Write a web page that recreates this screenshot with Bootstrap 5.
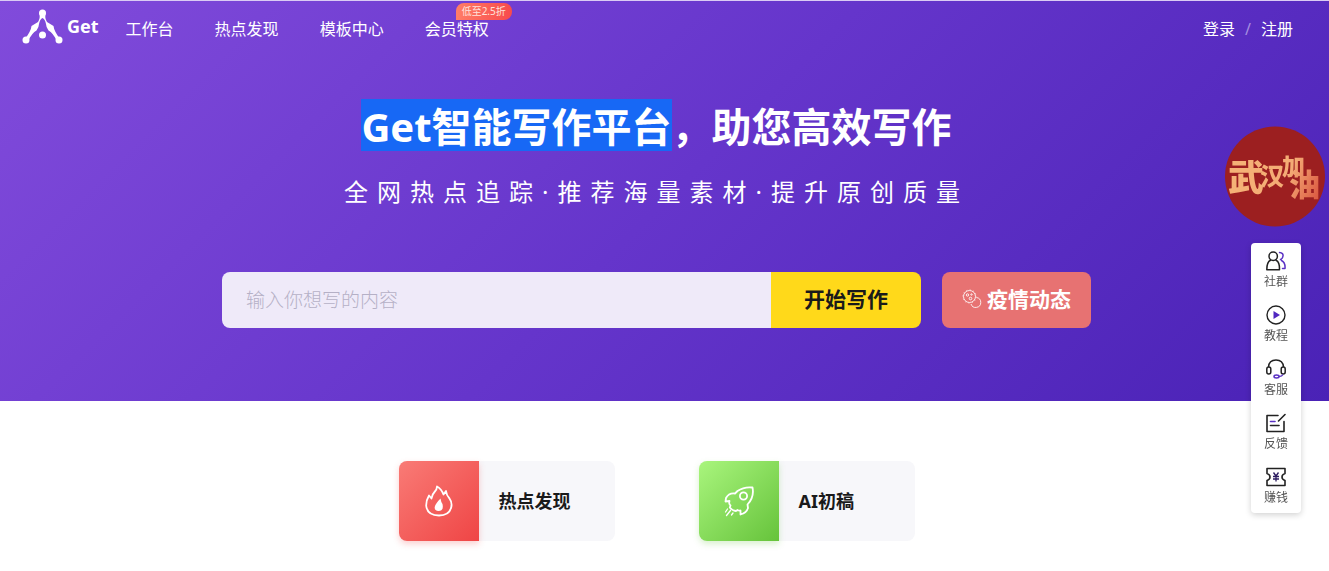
<!DOCTYPE html>
<html lang="zh-CN">
<head>
<meta charset="utf-8">
<meta name="viewport" content="width=device-width, initial-scale=1">
<title>Get智能写作平台</title>
<link href="https://cdn.jsdelivr.net/npm/bootstrap@5.3.0/dist/css/bootstrap.min.css" rel="stylesheet">
<style>
  body { font-family: "Noto Sans", "Noto Sans CJK SC", sans-serif; font-size: 16px; line-height: 24px; color: #1a1a1a; background: #fff; }
  .hero { background: linear-gradient(135deg, #814bdb 0%, #6535cb 50%, #4a22b6 100%); border-top: 1px solid #dacbf4; padding-bottom: 73px; color: #fff; }
  .site-nav { height: 56px; padding: 0 36px 0 22px; }
  .site-nav a { color: #fff; text-decoration: none; }
  .site-nav .brand { font-weight: 700; font-size: 18px; gap: 4px; margin-right: 27px; }
  .brand svg { margin-top: -5px; }
  .brand span { margin-top: -6px; }
  .menu { gap: 41px; }
  .promo { left: 31px; top: -14px; height: 17px; padding: 0 6px; border-radius: 8px 8px 8px 0; background: linear-gradient(90deg, #ff7d67, #f84a4c); color: #ffe3dc; font-size: 10px; line-height: 17px; white-space: nowrap; }
  .account { gap: 10px; }
  .slash { color: #a68de0; }
  .center-col { padding-right: 16px; }
  .headline { font-size: 40px; font-weight: 700; line-height: 48px; margin: 42px 0 22px; }
  .picked { display: inline-block; padding-top: 4px; background: #1768f5; }
  .tagline { font-size: 24px; line-height: 38px; letter-spacing: 9px; margin: 0 0 61px; }
  .search-row { width: 869px; max-width: 100%; gap: 21px; }
  .search-row input { height: 56px; border: 0; border-radius: 8px 0 0 8px; padding: 0 24px; font-size: 19px; font-weight: 300; background: #efeaf9; min-width: 0; }
  .search-row input::placeholder { color: #b5b0c6; opacity: 1; }
  .search-row button, .epidemic { height: 56px; border: 0; font-size: 21px; line-height: 30px; font-weight: 700; flex: none; white-space: nowrap; }
  .search-row button { width: 150px; background: #ffd91a; color: #1a1a1a; border-radius: 0 8px 8px 0; padding-bottom: 4px; }
  .epidemic { width: 149px; background: #e77272; color: #fff; border-radius: 8px; text-decoration: none; gap: 5px; padding-bottom: 2px; }
  .features { padding-top: 60px; padding-bottom: 30px; gap: 84px; }
  .feature { width: 216px; height: 80px; background: #f7f7fa; border-radius: 8px; color: #1a1a1a; text-decoration: none; font-size: 18px; font-weight: 700; gap: 20px; }
  .tile { width: 80px; height: 80px; border-radius: 8px 0 0 8px; }
  .tile-hot { background: linear-gradient(135deg, #f97b76, #ef4545); box-shadow: 0 3px 6px #ef454540; }
  .tile-ai { background: linear-gradient(135deg, #a9f57d, #66c33b); box-shadow: 0 3px 6px #66c33b40; }
  .cheer { position: fixed; right: 4px; top: 126px; }
  .cheer text { font-family: "Noto Sans CJK SC", sans-serif; font-weight: 900; }
  .side { position: fixed; right: 28px; top: 243px; width: 50px; background: #fff; border-radius: 4px; box-shadow: 0 2px 6px #0000002e; }
  .side a { height: 54px; padding-top: 8px; color: #555; text-decoration: none; font-size: 12px; line-height: 22px; }
</style>
</head>
<body>
<header class="hero">
  <nav class="site-nav d-flex align-items-center">
    <a href="#" class="brand d-flex align-items-center">
      <svg width="41" height="36" viewBox="0 0 41 36" fill="#fff">
        <path d="M17.500 4Q18.500 9 16 13L9.500 17Q9 22 3 30L6 32Q10 24 14.500 21.500Q17 18 17 15Q18 10 20.500 9Q23 10 24 15Q24 18 26.500 21.500Q31 24 35 32L38 30Q32 22 31.500 17L25 13Q22.500 9 23.500 4Z"/>
        <circle cx="20.500" cy="4" r="3.500"/><circle cx="4" cy="31" r="3.500"/><circle cx="37" cy="31" r="3.500"/><circle cx="20.500" cy="26" r="3.500"/>
      </svg>
      <span>Get</span>
    </a>
    <div class="menu d-flex">
      <a href="#">工作台</a>
      <a href="#">热点发现</a>
      <a href="#">模板中心</a>
      <a href="#" class="position-relative">会员特权<span class="promo position-absolute">低至2.5折</span></a>
    </div>
    <div class="account ms-auto d-flex">
      <a href="#">登录</a><span class="slash">/</span><a href="#">注册</a>
    </div>
  </nav>
  <div class="center-col d-flex flex-column align-items-center text-center">
    <h1 class="headline"><span class="picked">Get智能写作平台</span>，助您高效写作</h1>
    <p class="tagline">全网热点追踪·推荐海量素材·提升原创质量</p>
    <div class="search-row d-flex">
      <form class="d-flex flex-grow-1" onsubmit="return false">
        <input class="flex-grow-1" type="text" placeholder="输入你想写的内容" aria-label="输入你想写的内容">
        <button type="submit">开始写作</button>
      </form>
      <a href="#" class="epidemic d-flex align-items-center justify-content-center">
        <svg width="20" height="20" viewBox="0 0 20 20" fill="none" stroke="#fff" stroke-opacity=".85" stroke-width="1">
          <circle cx="7.500" cy="7.500" r="6"/><circle cx="7.500" cy="7.500" r="6.700" stroke-dasharray="1 2.500" stroke-width=".8"/>
          <circle cx="5.500" cy="6" r="1.200"/><circle cx="9.500" cy="5.500" r=".7"/><circle cx="8.500" cy="9.500" r="1.300"/>
          <path d="M14.500 8.500A5 5 0 1 1 9 15"/>
        </svg>
        <span>疫情动态</span>
      </a>
    </div>
  </div>
</header>

<main class="center-col">
  <div class="features d-flex flex-wrap justify-content-center">
    <a href="#" class="feature d-flex align-items-center">
      <span class="tile tile-hot d-flex align-items-center justify-content-center">
        <svg width="30" height="32" viewBox="0 0 30 32" fill="none" stroke="#fff" stroke-width="1.800" stroke-linejoin="round">
          <path d="M5 10.500L7.500 13.500Q8 9.500 10.500 7Q13 4.500 13 1.500Q17.500 4 19.500 9.500L22 6Q22.500 10.500 25.500 13.500Q28 17 27.500 21Q26 30.500 15 30.500Q3.500 30.500 2.200 21Q2 15.500 5 10.500Z"/>
          <path d="M16.500 13.500Q17 17 18.500 19Q20 26 14.500 26Q9.500 25.500 11 21Q12 18 16.500 13.500Z" fill="#fff" stroke="none"/>
        </svg>
      </span>
      <span>热点发现</span>
    </a>
    <a href="#" class="feature d-flex align-items-center">
      <span class="tile tile-ai d-flex align-items-center justify-content-center">
        <svg width="32" height="32" viewBox="0 0 32 32" fill="none" stroke="#fff" stroke-width="1.800" stroke-linejoin="round" stroke-linecap="round">
          <path d="M29.500 2.500Q21 1.500 14.500 6L12 8.500Q6 7.500 3 13L2.500 16.500L6.500 16Q5.500 19 7.500 20.500L6.800 22.500Q9 25.500 13 26L14.500 25Q16 26 17.500 25.500L17.500 29.500Q23.500 28 25 23L24.500 19.500Q31.500 12 29.500 2.500Z"/>
          <circle cx="20.500" cy="11" r="3.600"/>
          <path d="M4.500 24L2.500 27M7.500 25.500L3.500 30.500M10 28L8.500 30" stroke-width="1.300"/>
        </svg>
      </span>
      <span>AI初稿</span>
    </a>
  </div>
</main>

<a href="#" class="cheer" aria-label="武汉加油">
  <svg class="d-block" width="100" height="101" viewBox="0 0 100 101">
    <defs><linearGradient id="gold" gradientUnits="userSpaceOnUse" x1="0" y1="30" x2="100" y2="75"><stop offset="0" stop-color="#f5b477"/><stop offset=".6" stop-color="#f4ab75"/><stop offset="1" stop-color="#d64837"/></linearGradient></defs>
    <circle cx="50" cy="50.500" r="50" fill="#9c1f20"/>
    <g fill="url(#gold)">
      <text x="3" y="65" font-size="36">武</text>
      <text x="35" y="59" font-size="24">汉</text>
      <text x="57" y="49" font-size="23">加</text>
      <text x="64" y="70" font-size="31">油</text>
    </g>
  </svg>
</a>

<aside class="side">
  <a href="#" class="d-flex flex-column align-items-center">
    <svg width="20" height="20" viewBox="0 0 20 20" fill="none" stroke="#222" stroke-width="1.500" stroke-linecap="round" stroke-linejoin="round"><circle cx="7.200" cy="5.200" r="4.200"/><path d="M4.500 9.300Q.8 11 .8 18.700H13.500Q13.800 11 10 9.300"/><path d="M13.500 1.500Q17.500 2 17 5Q16.500 8 14.500 8.500M15.500 9.500Q19.500 11.500 19 17.500H16.500" stroke="#5b32c4"/></svg>社群
  </a>
  <a href="#" class="d-flex flex-column align-items-center">
    <svg width="20" height="20" viewBox="0 0 20 20" fill="none" stroke="#222" stroke-width="1.400"><circle cx="10" cy="10" r="9"/><path d="M7.500 6V14L14 10Z" fill="#5027c0" stroke="none"/></svg>教程
  </a>
  <a href="#" class="d-flex flex-column align-items-center">
    <svg width="20" height="20" viewBox="0 0 20 20" fill="none" stroke="#222" stroke-width="1.500"><path d="M2.500 8Q3 1 10 1Q17 1 17.500 8"/><rect x=".8" y="8" width="4" height="7" rx="2"/><rect x="15.200" y="8" width="4" height="7" rx="2"/><path d="M17 15.500Q16 17.500 13 17.500" stroke="#5b32c4"/><ellipse cx="10.500" cy="17.500" rx="2.500" ry="1.500" stroke="#5b32c4"/></svg>客服
  </a>
  <a href="#" class="d-flex flex-column align-items-center">
    <svg width="20" height="20" viewBox="0 0 20 20" fill="none" stroke="#222" stroke-width="1.600" stroke-linecap="round" stroke-linejoin="round"><path d="M12 2.500H1V18.500H18V8.500M19 1.500L12.500 8"/><path d="M4.500 8.500H9" stroke="#5b32c4"/><path d="M4.500 12.500H13"/></svg>反馈
  </a>
  <a href="#" class="d-flex flex-column align-items-center">
    <svg width="20" height="20" viewBox="0 0 20 20" fill="none" stroke="#222" stroke-width="1.600" stroke-linejoin="round"><path d="M1 1.500H19V6.500Q16 7.500 16 10Q16 12.500 19 13.500V18.500H1V13.500Q4 12.500 4 10Q4 7.500 1 6.500Z"/><path d="M7.500 5.500L10 9L12.500 5.500M10 9V14.500M7 9.500H13M7 12H13" stroke-width="1.300" stroke="#2c1c60"/></svg>赚钱
  </a>
</aside>
<script src="https://cdn.jsdelivr.net/npm/bootstrap@5.3.0/dist/js/bootstrap.bundle.min.js"></script>
</body>
</html>
